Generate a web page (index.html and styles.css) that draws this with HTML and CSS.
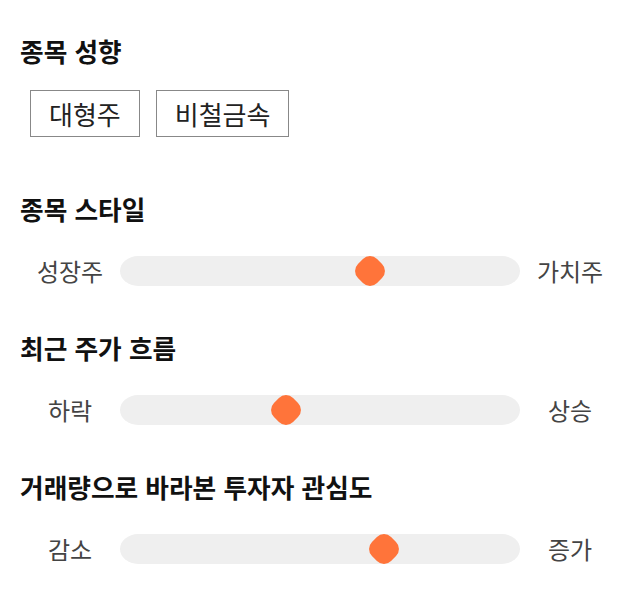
FILE: index.html
```html
<!DOCTYPE html>
<html lang="ko">
<head>
<meta charset="utf-8">
<link rel="stylesheet" href="styles.css">
</head>
<body>
<div class="page">
  <section class="sec">
    <h2 class="title">종목 성향</h2>
    <div class="tags">
      <span class="tag">대형주</span>
      <span class="tag">비철금속</span>
    </div>
  </section>
  <section class="sec sec-slider sec-first">
    <h2 class="title">종목 스타일</h2>
    <div class="row">
      <span class="lab">성장주</span>
      <div class="track"><span class="knob" style="left: 62.4%"></span></div>
      <span class="lab">가치주</span>
    </div>
  </section>
  <section class="sec sec-slider">
    <h2 class="title">최근 주가 흐름</h2>
    <div class="row">
      <span class="lab">하락</span>
      <div class="track"><span class="knob" style="left: 41.6%"></span></div>
      <span class="lab">상승</span>
    </div>
  </section>
  <section class="sec sec-slider">
    <h2 class="title">거래량으로 바라본 투자자 관심도</h2>
    <div class="row">
      <span class="lab">감소</span>
      <div class="track"><span class="knob" style="left: 66%"></span></div>
      <span class="lab">증가</span>
    </div>
  </section>
</div>
</body>
</html>
```

FILE: styles.css
```css
* { box-sizing: border-box; }
html, body {
  margin: 0;
  padding: 0;
  background: #fff;
}
body {
  font-family: "Noto Sans CJK KR", "Noto Sans", sans-serif;
  color: #111;
}
.page {
  width: 640px;
  padding: 36px 20px 0;
}
.title {
  margin: 0;
  font-size: 25.7px;
  line-height: 30px;
  height: 30px;
  font-weight: 700;
  color: #111;
}
.tags {
  display: flex;
  gap: 16px;
  margin: 24px 0 0 10px;
}
.tag {
  display: flex;
  align-items: center;
  justify-content: center;
  height: 47px;
  padding: 0 18px;
  border: 1px solid #888;
  font-size: 26px;
  color: #222;
}
.sec-first { margin-top: 57px; }
.sec-slider + .sec-slider { margin-top: 47px; }
.row {
  display: grid;
  grid-template-columns: 100px 1fr 100px;
  align-items: center;
  margin-top: 32px;
  height: 30px;
}
.lab {
  text-align: center;
  font-size: 24px;
  line-height: 30px;
  color: #444;
}
.track {
  position: relative;
  height: 30px;
  background: #efefef;
  border-radius: 18px / 15px;
}
.knob {
  position: absolute;
  top: 50%;
  width: 27px;
  height: 27px;
  background: #ff743a;
  border-radius: 10px;
  transform: translate(-50%, -50%) rotate(45deg);
}
```
